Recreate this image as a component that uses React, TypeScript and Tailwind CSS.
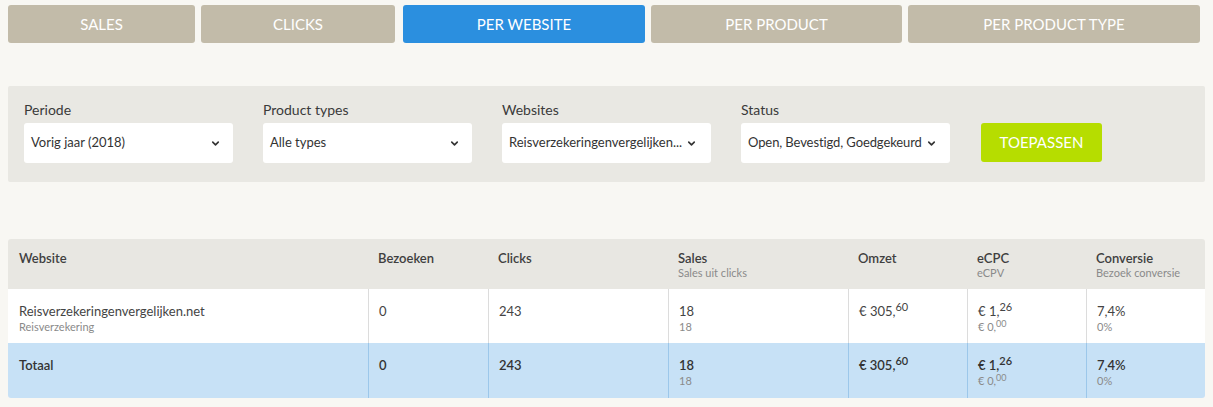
import { ChevronDown } from "lucide-react";

/* ─── data ─── */
const tabs = [
  { label: "Sales", w: "w-[187px]" },
  { label: "Clicks", w: "w-[194px]" },
  { label: "Per website", w: "w-[242px] ml-[2px]", active: true },
  { label: "Per product", w: "w-[251px]" },
  { label: "Per product type", w: "w-[292px]" },
];

const filters = [
  { label: "Periode", value: "Vorig jaar (2018)" },
  { label: "Product types", value: "Alle types" },
  { label: "Websites", value: "Reisverzekeringenvergelijken...", tight: true },
  { label: "Status", value: "Open, Bevestigd, Goedgekeurd", tight: true },
];

const columns = [
  { title: "Website", w: "w-[360px]" },
  { title: "Bezoeken", w: "w-[120px]" },
  { title: "Clicks", w: "w-[180px]" },
  { title: "Sales", sub: "Sales uit clicks", w: "w-[180px]" },
  { title: "Omzet", w: "w-[119px]" },
  { title: "eCPC", sub: "eCPV", w: "w-[119px]" },
  { title: "Conversie", sub: "Bezoek conversie", w: "flex-1" },
];

function Money({ euro, cents, small }: { euro: string; cents: string; small?: boolean }) {
  return (
    <span className={small ? "text-[11px]" : ""}>
      € {euro},<sup className={small ? "text-[9px]" : "text-[11px]"}>{cents}</sup>
    </span>
  );
}

function Row({ total }: { total?: boolean }) {
  const border = total ? "border-[#9cc7ea]" : "border-[#dcdcdc]";
  const cell = `pl-[10px] pr-[8px] pt-[13px] border-l ${border}`;
  const sub = "text-[11px] text-[#8a8a8a] leading-[14px]";
  return (
    <div
      className={`flex ${total ? "h-[55px] bg-[#c7e1f6] font-semibold text-[#333]" : "h-[54px] bg-white text-[#444]"}`}
    >
      <div className="w-[360px] px-[11px] pt-[13px]">
        {total ? (
          <div>Totaal</div>
        ) : (
          <>
            <div className="leading-[18px]">Reisverzekeringenvergelijken.net</div>
            <div className={sub}>Reisverzekering</div>
          </>
        )}
      </div>
      <div className={`w-[120px] ${cell}`}>0</div>
      <div className={`w-[180px] ${cell}`}>243</div>
      <div className={`w-[180px] ${cell}`}>
        <div className="leading-[18px]">18</div>
        <div className={`${sub} font-normal`}>18</div>
      </div>
      <div className={`w-[119px] ${cell}`}>
        <div className="leading-[18px]">
          <Money euro="305" cents="60" />
        </div>
      </div>
      <div className={`w-[119px] ${cell}`}>
        <div className="leading-[18px]">
          <Money euro="1" cents="26" />
        </div>
        <div className={`${sub} font-normal`}>
          <Money euro="0" cents="00" small />
        </div>
      </div>
      <div className={`flex-1 ${cell}`}>
        <div className="leading-[18px]">7,4%</div>
        <div className={`${sub} font-normal`}>0%</div>
      </div>
    </div>
  );
}

export default function App() {
  return (
    <div className="min-h-screen bg-[#f8f7f3] font-['Lato','Liberation_Sans',sans-serif] text-[13px] pt-[5px] px-[8px]">
      {/* Tabs */}
      <div className="flex gap-[6px] w-[1192px]">
        {tabs.map((t) => (
          <button
            key={t.label}
            className={`${t.w} h-[38px] rounded-[3px] uppercase text-[15px] text-white ${
              t.active ? "bg-[#2b8fdf]" : "bg-[#c2bba9]"
            }`}
          >
            {t.label}
          </button>
        ))}
      </div>

      {/* Filters */}
      <div className="mt-[43px] w-[1197px] h-[96px] bg-[#e9e8e3] rounded-[2px] flex items-end gap-[30px] px-[16px] pb-[19px]">
        {filters.map((f) => (
          <div key={f.label} className="w-[209px]">
            <div className="text-[14px] text-[#3a3a3a] mb-[3px]">{f.label}</div>
            <div className="h-[40px] bg-white rounded-[3px] flex items-center pl-[7px] pr-[12px]">
              <span
                className={`whitespace-nowrap text-[#333] text-[13px] ${
                  f.label === "Status" ? "tracking-[-0.1px]" : ""
                }`}
              >
                {f.value}
              </span>
              <ChevronDown
                className={`w-[11px] h-[11px] text-[#333] shrink-0 ${f.tight ? "ml-[4px]" : "ml-auto"}`}
                strokeWidth={3.5}
              />
            </div>
          </div>
        ))}
        <button className="w-[121px] h-[39px] mb-[1px] ml-[1px] bg-[#b6dd00] rounded-[3px] text-white text-[15px] uppercase">
          Toepassen
        </button>
      </div>

      {/* Table */}
      <div className="mt-[57px] w-[1197px] rounded-[3px] overflow-hidden">
        <div className="flex h-[50px] bg-[#e8e7e2] text-[#3f3f3f]">
          {columns.map((c, i) => (
            <div key={c.title} className={`${c.w} ${i === 0 ? "pl-[11px]" : "pl-[10px]"} pt-[11px]`}>
              <div className="text-[13px] font-semibold leading-[16px]">{c.title}</div>
              {c.sub && <div className="text-[11px] text-[#8a8a8a] leading-[14px]">{c.sub}</div>}
            </div>
          ))}
        </div>
        <Row />
        <Row total />
      </div>
    </div>
  );
}
